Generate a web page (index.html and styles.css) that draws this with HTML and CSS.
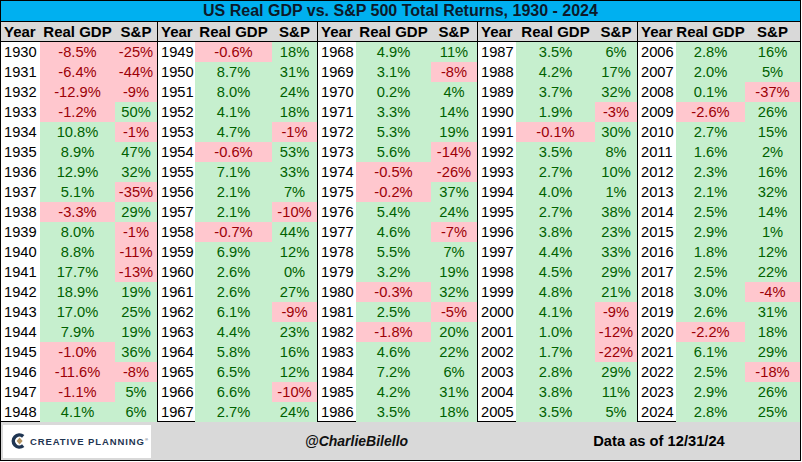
FILE: index.html
```html
<!DOCTYPE html>
<html>
<head>
<meta charset="utf-8">
<link rel="stylesheet" href="styles.css">
</head>
<body>
<div class="sheet">
  <div class="title">US Real GDP vs. S&amp;P 500 Total Returns, 1930 - 2024</div>
  <div class="table">
    <div class="grp g1">
      <div class="h y">Year</div><div class="h">Real GDP</div><div class="h">S&amp;P</div>
      <div class="y">1930</div><div class="n">-8.5%</div><div class="n">-25%</div>
      <div class="y">1931</div><div class="n">-6.4%</div><div class="n">-44%</div>
      <div class="y">1932</div><div class="n">-12.9%</div><div class="n">-9%</div>
      <div class="y">1933</div><div class="n">-1.2%</div><div class="p">50%</div>
      <div class="y">1934</div><div class="p">10.8%</div><div class="n">-1%</div>
      <div class="y">1935</div><div class="p">8.9%</div><div class="p">47%</div>
      <div class="y">1936</div><div class="p">12.9%</div><div class="p">32%</div>
      <div class="y">1937</div><div class="p">5.1%</div><div class="n">-35%</div>
      <div class="y">1938</div><div class="n">-3.3%</div><div class="p">29%</div>
      <div class="y">1939</div><div class="p">8.0%</div><div class="n">-1%</div>
      <div class="y">1940</div><div class="p">8.8%</div><div class="n">-11%</div>
      <div class="y">1941</div><div class="p">17.7%</div><div class="n">-13%</div>
      <div class="y">1942</div><div class="p">18.9%</div><div class="p">19%</div>
      <div class="y">1943</div><div class="p">17.0%</div><div class="p">25%</div>
      <div class="y">1944</div><div class="p">7.9%</div><div class="p">19%</div>
      <div class="y">1945</div><div class="n">-1.0%</div><div class="p">36%</div>
      <div class="y">1946</div><div class="n">-11.6%</div><div class="n">-8%</div>
      <div class="y">1947</div><div class="n">-1.1%</div><div class="p">5%</div>
      <div class="y">1948</div><div class="p">4.1%</div><div class="p">6%</div>
    </div>
    <div class="grp g2">
      <div class="h y">Year</div><div class="h">Real GDP</div><div class="h">S&amp;P</div>
      <div class="y">1949</div><div class="n">-0.6%</div><div class="p">18%</div>
      <div class="y">1950</div><div class="p">8.7%</div><div class="p">31%</div>
      <div class="y">1951</div><div class="p">8.0%</div><div class="p">24%</div>
      <div class="y">1952</div><div class="p">4.1%</div><div class="p">18%</div>
      <div class="y">1953</div><div class="p">4.7%</div><div class="n">-1%</div>
      <div class="y">1954</div><div class="n">-0.6%</div><div class="p">53%</div>
      <div class="y">1955</div><div class="p">7.1%</div><div class="p">33%</div>
      <div class="y">1956</div><div class="p">2.1%</div><div class="p">7%</div>
      <div class="y">1957</div><div class="p">2.1%</div><div class="n">-10%</div>
      <div class="y">1958</div><div class="n">-0.7%</div><div class="p">44%</div>
      <div class="y">1959</div><div class="p">6.9%</div><div class="p">12%</div>
      <div class="y">1960</div><div class="p">2.6%</div><div class="p">0%</div>
      <div class="y">1961</div><div class="p">2.6%</div><div class="p">27%</div>
      <div class="y">1962</div><div class="p">6.1%</div><div class="n">-9%</div>
      <div class="y">1963</div><div class="p">4.4%</div><div class="p">23%</div>
      <div class="y">1964</div><div class="p">5.8%</div><div class="p">16%</div>
      <div class="y">1965</div><div class="p">6.5%</div><div class="p">12%</div>
      <div class="y">1966</div><div class="p">6.6%</div><div class="n">-10%</div>
      <div class="y">1967</div><div class="p">2.7%</div><div class="p">24%</div>
    </div>
    <div class="grp g3">
      <div class="h y">Year</div><div class="h">Real GDP</div><div class="h">S&amp;P</div>
      <div class="y">1968</div><div class="p">4.9%</div><div class="p">11%</div>
      <div class="y">1969</div><div class="p">3.1%</div><div class="n">-8%</div>
      <div class="y">1970</div><div class="p">0.2%</div><div class="p">4%</div>
      <div class="y">1971</div><div class="p">3.3%</div><div class="p">14%</div>
      <div class="y">1972</div><div class="p">5.3%</div><div class="p">19%</div>
      <div class="y">1973</div><div class="p">5.6%</div><div class="n">-14%</div>
      <div class="y">1974</div><div class="n">-0.5%</div><div class="n">-26%</div>
      <div class="y">1975</div><div class="n">-0.2%</div><div class="p">37%</div>
      <div class="y">1976</div><div class="p">5.4%</div><div class="p">24%</div>
      <div class="y">1977</div><div class="p">4.6%</div><div class="n">-7%</div>
      <div class="y">1978</div><div class="p">5.5%</div><div class="p">7%</div>
      <div class="y">1979</div><div class="p">3.2%</div><div class="p">19%</div>
      <div class="y">1980</div><div class="n">-0.3%</div><div class="p">32%</div>
      <div class="y">1981</div><div class="p">2.5%</div><div class="n">-5%</div>
      <div class="y">1982</div><div class="n">-1.8%</div><div class="p">20%</div>
      <div class="y">1983</div><div class="p">4.6%</div><div class="p">22%</div>
      <div class="y">1984</div><div class="p">7.2%</div><div class="p">6%</div>
      <div class="y">1985</div><div class="p">4.2%</div><div class="p">31%</div>
      <div class="y">1986</div><div class="p">3.5%</div><div class="p">18%</div>
    </div>
    <div class="grp g4">
      <div class="h y">Year</div><div class="h">Real GDP</div><div class="h">S&amp;P</div>
      <div class="y">1987</div><div class="p">3.5%</div><div class="p">6%</div>
      <div class="y">1988</div><div class="p">4.2%</div><div class="p">17%</div>
      <div class="y">1989</div><div class="p">3.7%</div><div class="p">32%</div>
      <div class="y">1990</div><div class="p">1.9%</div><div class="n">-3%</div>
      <div class="y">1991</div><div class="n">-0.1%</div><div class="p">30%</div>
      <div class="y">1992</div><div class="p">3.5%</div><div class="p">8%</div>
      <div class="y">1993</div><div class="p">2.7%</div><div class="p">10%</div>
      <div class="y">1994</div><div class="p">4.0%</div><div class="p">1%</div>
      <div class="y">1995</div><div class="p">2.7%</div><div class="p">38%</div>
      <div class="y">1996</div><div class="p">3.8%</div><div class="p">23%</div>
      <div class="y">1997</div><div class="p">4.4%</div><div class="p">33%</div>
      <div class="y">1998</div><div class="p">4.5%</div><div class="p">29%</div>
      <div class="y">1999</div><div class="p">4.8%</div><div class="p">21%</div>
      <div class="y">2000</div><div class="p">4.1%</div><div class="n">-9%</div>
      <div class="y">2001</div><div class="p">1.0%</div><div class="n">-12%</div>
      <div class="y">2002</div><div class="p">1.7%</div><div class="n">-22%</div>
      <div class="y">2003</div><div class="p">2.8%</div><div class="p">29%</div>
      <div class="y">2004</div><div class="p">3.8%</div><div class="p">11%</div>
      <div class="y">2005</div><div class="p">3.5%</div><div class="p">5%</div>
    </div>
    <div class="grp g5">
      <div class="h y">Year</div><div class="h">Real GDP</div><div class="h">S&amp;P</div>
      <div class="y">2006</div><div class="p">2.8%</div><div class="p">16%</div>
      <div class="y">2007</div><div class="p">2.0%</div><div class="p">5%</div>
      <div class="y">2008</div><div class="p">0.1%</div><div class="n">-37%</div>
      <div class="y">2009</div><div class="n">-2.6%</div><div class="p">26%</div>
      <div class="y">2010</div><div class="p">2.7%</div><div class="p">15%</div>
      <div class="y">2011</div><div class="p">1.6%</div><div class="p">2%</div>
      <div class="y">2012</div><div class="p">2.3%</div><div class="p">16%</div>
      <div class="y">2013</div><div class="p">2.1%</div><div class="p">32%</div>
      <div class="y">2014</div><div class="p">2.5%</div><div class="p">14%</div>
      <div class="y">2015</div><div class="p">2.9%</div><div class="p">1%</div>
      <div class="y">2016</div><div class="p">1.8%</div><div class="p">12%</div>
      <div class="y">2017</div><div class="p">2.5%</div><div class="p">22%</div>
      <div class="y">2018</div><div class="p">3.0%</div><div class="n">-4%</div>
      <div class="y">2019</div><div class="p">2.6%</div><div class="p">31%</div>
      <div class="y">2020</div><div class="n">-2.2%</div><div class="p">18%</div>
      <div class="y">2021</div><div class="p">6.1%</div><div class="p">29%</div>
      <div class="y">2022</div><div class="p">2.5%</div><div class="n">-18%</div>
      <div class="y">2023</div><div class="p">2.9%</div><div class="p">26%</div>
      <div class="y">2024</div><div class="p">2.8%</div><div class="p">25%</div>
    </div>
  </div>
  <div class="footer">
    <div class="logo-cell">
      <div class="logo">
        <svg class="logo-mark" width="15" height="16" viewBox="0 0 15 16">
          <path d="M12.2 3.4 A6 6 0 1 0 12.2 12.6" fill="none" stroke="#1f3552" stroke-width="3.6"/>
          <path d="M5.6 8 L8.6 4.6 L11.6 8 L8.6 11.4 Z" fill="#b3935f"/>
        </svg>
        <span class="logo-text">CREATIVE PLANNING</span><span class="reg">®</span>
      </div>
    </div>
    <div class="handle">@CharlieBilello</div>
    <div class="asof">Data as of 12/31/24</div>
  </div>
</div>
</body>
</html>
```

FILE: styles.css
```css
* { box-sizing: border-box; margin: 0; padding: 0; }
html, body { background: #fff; }
body { margin: 0; }

.sheet {
  width: 801px;
  height: 461px;
  border: 1px solid #000;
  display: flex;
  flex-direction: column;
  font-family: "Liberation Sans", Arial, sans-serif;
  color: #000;
}

.title {
  height: 21px;
  background: #00b0f0;
  border-bottom: 1px solid #000;
  text-align: center;
  font-weight: bold;
  font-size: 16px;
  line-height: 20px;
  color: #0c1a2a;
}

.table {
  display: flex;
  height: 400px;
  border-bottom: 1px solid #000;
}

.grp {
  display: grid;
  grid-template-rows: 20px repeat(19, 20px);
  border-right: 1px solid #000;
  font-size: 14.7px;
  line-height: 20px;
}
.g1 { width: 157px; grid-template-columns: 39px 75px 42px; }
.g2 { width: 160px; grid-template-columns: 37px 77px 45px; }
.g3 { width: 160px; grid-template-columns: 38px 75px 46px; }
.g4 { width: 160px; grid-template-columns: 38px 79px 42px; }
.g5 { width: 162px; grid-template-columns: 38px 69px 55px; border-right: none; }

.grp > div { text-align: center; white-space: nowrap; }

.h {
  background: #d9d9d9;
  font-weight: bold;
  font-size: 15px;
  border-bottom: 1px solid #000;
  line-height: 19px;
}
.grp > .y { text-align: left; padding-left: 3px; }

.n { background: #ffc7ce; color: #9c0006; }
.p { background: #c6efce; color: #006100; }

.footer {
  flex: 1;
  background: #d9d9d9;
  display: grid;
  grid-template-columns: 301px 218px 1fr;
  align-items: center;
}

.logo-cell { padding-left: 2px; }
.logo {
  width: 148px;
  height: 33px;
  background: #fff;
  display: flex;
  align-items: center;
  padding-left: 8px;
  white-space: nowrap;
}
.logo-mark { margin-right: 4px; flex: none; }
.logo-text {
  font-family: "Liberation Sans", Arial, sans-serif;
  font-weight: bold;
  font-size: 9.5px;
  letter-spacing: 0.9px;
  color: #1f3552;
}
.reg { font-size: 4px; color: #1f3552; align-self: flex-start; margin-top: 12px; }

.handle {
  padding-left: 3px;
  font-family: "Liberation Sans", Arial, sans-serif;
  font-style: italic;
  font-weight: bold;
  font-size: 14px;
  color: #111;
}

.asof {
  text-align: center;
  font-weight: bold;
  font-size: 14.7px;
  padding-right: 2px;
}
```
